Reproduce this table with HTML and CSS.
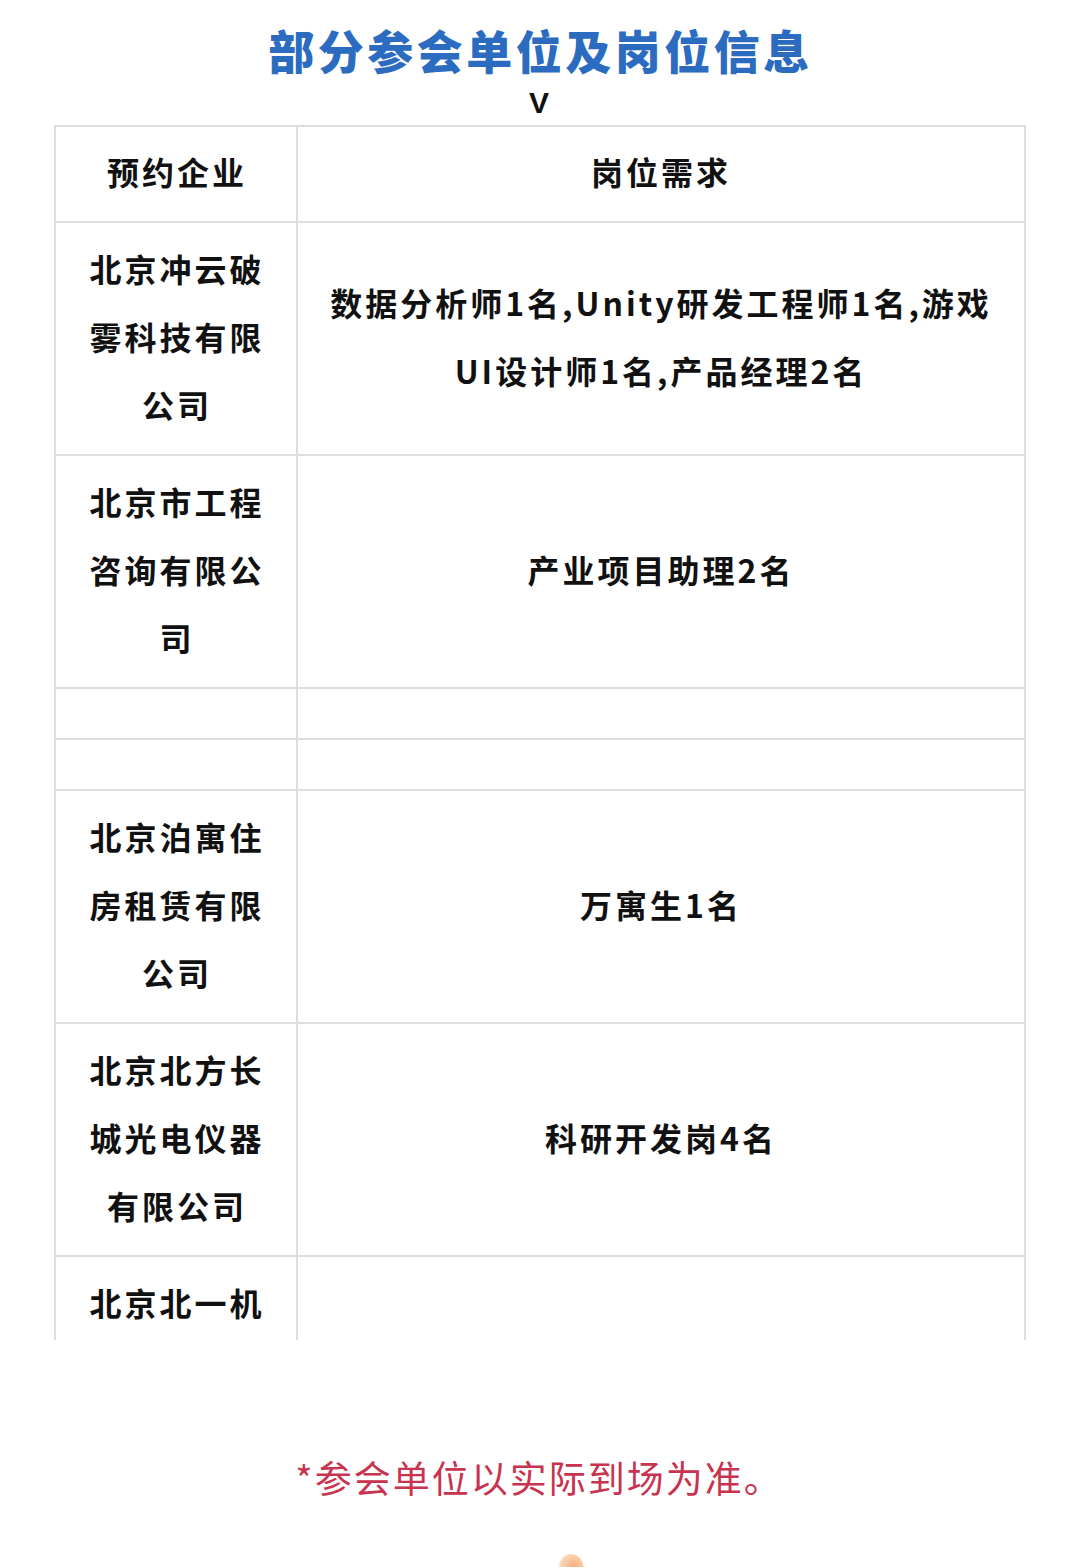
FILE: index.html
```html
<!DOCTYPE html>
<html lang="zh-CN">
<head>
<meta charset="utf-8">
<title>部分参会单位及岗位信息</title>
<link rel="stylesheet" href="styles.css">
</head>
<body>
<div class="page">
  <h1 class="title">部分参会单位及岗位信息</h1>
  <div class="arrow">V</div>
  <div class="table-wrap">
    <table class="jobs">
      <colgroup><col class="col-a"><col class="col-b"></colgroup>
      <tr class="head"><td class="co">预约企业</td><td class="req">岗位需求</td></tr>
      <tr><td class="co">北京冲云破雾科技有限公司</td><td class="req">数据分析师1名,Unity研发工程师1名,游戏UI设计师1名,产品经理2名</td></tr>
      <tr><td class="co">北京市工程咨询有限公司</td><td class="req">产业项目助理2名</td></tr>
      <tr class="empty"><td class="co"></td><td class="req"></td></tr>
      <tr class="empty"><td class="co"></td><td class="req"></td></tr>
      <tr><td class="co">北京泊寓住房租赁有限公司</td><td class="req">万寓生1名</td></tr>
      <tr><td class="co">北京北方长城光电仪器有限公司</td><td class="req">科研开发岗4名</td></tr>
      <tr><td class="co">北京北一机床股份有限公司</td><td class="req">机械工程师2名</td></tr>
    </table>
  </div>
  <p class="note">*参会单位以实际到场为准。</p>
  <div class="blob-area"><div class="blob"></div></div>
</div>
</body>
</html>
```

FILE: styles.css
```css
html, body {
  margin: 0;
  padding: 0;
  background: #ffffff;
}
.page {
  width: 1078px;
  font-family: "Noto Sans CJK SC", "Noto Sans", sans-serif;
}
.title {
  margin: 0;
  padding-top: 18px;
  height: 62px;
  line-height: 62px;
  font-size: 46px;
  font-weight: 900;
  letter-spacing: 3.5px;
  text-indent: 3px;
  color: #2b6cc0;
  text-align: center;
}
.arrow {
  height: 45px;
  line-height: 46px;
  font-family: "Liberation Sans", Arial, sans-serif;
  font-weight: 700;
  font-size: 30px;
  color: #111111;
  text-align: center;
}
.table-wrap {
  margin-left: 54px;
  width: 972px;
  height: 1215px;
  overflow: hidden;
}
.jobs {
  width: 972px;
  table-layout: fixed;
  border-collapse: collapse;
  border: 2px solid #dedede;
}
.col-a { width: 242px; }
.jobs td {
  border: 2px solid #dedede;
  text-align: center;
  vertical-align: middle;
  font-size: 32px;
  line-height: 68px;
  font-weight: 700;
  letter-spacing: 3px;
  color: #111111;
}
.jobs td.co {
  padding: 11px 24px 16px 26px;
}
.jobs td.req {
  padding: 11px 16px 16px;
}
.jobs .head td.co,
.jobs .head td.req {
  padding-top: 10px;
  padding-bottom: 16px;
}
.jobs .empty td.co,
.jobs .empty td.req {
  height: 49px;
  padding: 0;
  line-height: 49px;
}
.note {
  margin: 112px 0 0;
  text-align: center;
  font-size: 37px;
  line-height: 50px;
  letter-spacing: 2px;
  color: #c8334f;
  font-weight: 400;
}
.blob-area {
  position: relative;
  height: 65px;
}
.blob {
  position: absolute;
  left: 558px;
  top: 52px;
  width: 26px;
  height: 30px;
  border-radius: 50%;
  background: radial-gradient(circle at 60% 40%, #f6b07a 0%, #fad4b4 50%, rgba(255,255,255,0) 75%);
}
```
